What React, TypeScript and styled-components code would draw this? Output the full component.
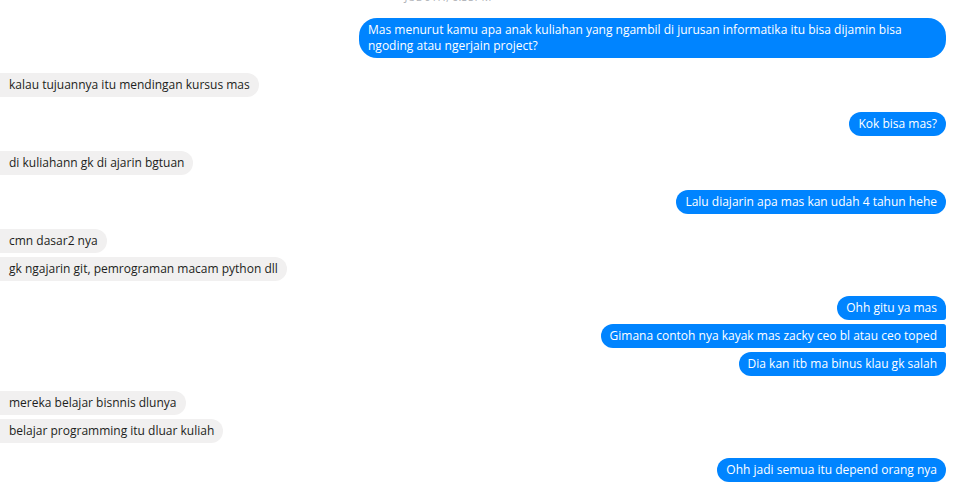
import React from "react";
import styled, { createGlobalStyle, css } from "styled-components";

const Global = createGlobalStyle`
  html, body { margin: 0; padding: 0; background: #ffffff; }
  body { font-family: "Segoe UI", "Open Sans", "Noto Sans", sans-serif; overflow: hidden; }
`;

type Side = "in" | "out";
type Pos = "single" | "first" | "middle" | "last";

type Msg = { side: Side; text: string };

const groups: Msg[][] = [
  [
    {
      side: "out",
      text: "Mas menurut kamu apa anak kuliahan yang ngambil di jurusan informatika itu bisa dijamin bisa ngoding atau ngerjain project?",
    },
  ],
  [{ side: "in", text: "kalau tujuannya itu mendingan kursus mas" }],
  [{ side: "out", text: "Kok bisa mas?" }],
  [{ side: "in", text: "di kuliahann gk di ajarin bgtuan" }],
  [{ side: "out", text: "Lalu diajarin apa mas kan udah 4 tahun hehe" }],
  [
    { side: "in", text: "cmn dasar2 nya" },
    { side: "in", text: "gk ngajarin git, pemrograman macam python dll" },
  ],
  [
    { side: "out", text: "Ohh gitu ya mas" },
    { side: "out", text: "Gimana contoh nya kayak mas zacky ceo bl atau ceo toped" },
    { side: "out", text: "Dia kan itb ma binus klau gk salah" },
  ],
  [
    { side: "in", text: "mereka belajar bisnnis dlunya" },
    { side: "in", text: "belajar programming itu dluar kuliah" },
  ],
  [{ side: "out", text: "Ohh jadi semua itu depend orang nya" }],
];

const Thread = styled.div`
  display: flex;
  flex-direction: column;
  gap: 15px;
  width: 958px;
  height: 496px;
  padding-right: 12px;
  box-sizing: border-box;
`;

const Stamp = styled.div`
  margin-top: -10px;
  margin-bottom: -1px;
  text-align: center;
  padding-right: 50px;
  font-size: 11px;
  line-height: 14px;
  color: #b0b3b8;
  letter-spacing: 0.2px;
`;

const Group = styled.div<{ $side: Side }>`
  display: flex;
  flex-direction: column;
  align-items: ${(p) => (p.$side === "out" ? "flex-end" : "flex-start")};
  gap: 4px;
`;

const R = 18;
const S = 4;

const Bubble = styled.div<{ $side: Side; $pos: Pos }>`
  font-size: 12px;
  line-height: 16px;
  padding: 4px 9px;
  max-width: 587px;
  box-sizing: border-box;
  ${(p) =>
    p.$side === "out"
      ? css`
          background: #0084ff;
          color: #ffffff;
          border-radius: ${R}px
            ${p.$pos === "middle" || p.$pos === "last" ? S : R}px
            ${p.$pos === "middle" || p.$pos === "first" ? S : R}px ${R}px;
        `
      : css`
          background: #f1f0f0;
          color: #1c1e21;
          border-radius: 0 ${R}px ${R}px 0;
        `}
`;

const posOf = (i: number, n: number): Pos =>
  n === 1 ? "single" : i === 0 ? "first" : i === n - 1 ? "last" : "middle";

export default function App() {
  return (
    <>
      <Global />
      <Thread>
        <Stamp>JUL 9TH, 6:35PM</Stamp>
        {groups.map((g, gi) => (
          <Group key={gi} $side={g[0].side}>
            {g.map((m, i) => (
              <Bubble key={i} $side={m.side} $pos={posOf(i, g.length)}>
                {m.text}
              </Bubble>
            ))}
          </Group>
        ))}
      </Thread>
    </>
  );
}
